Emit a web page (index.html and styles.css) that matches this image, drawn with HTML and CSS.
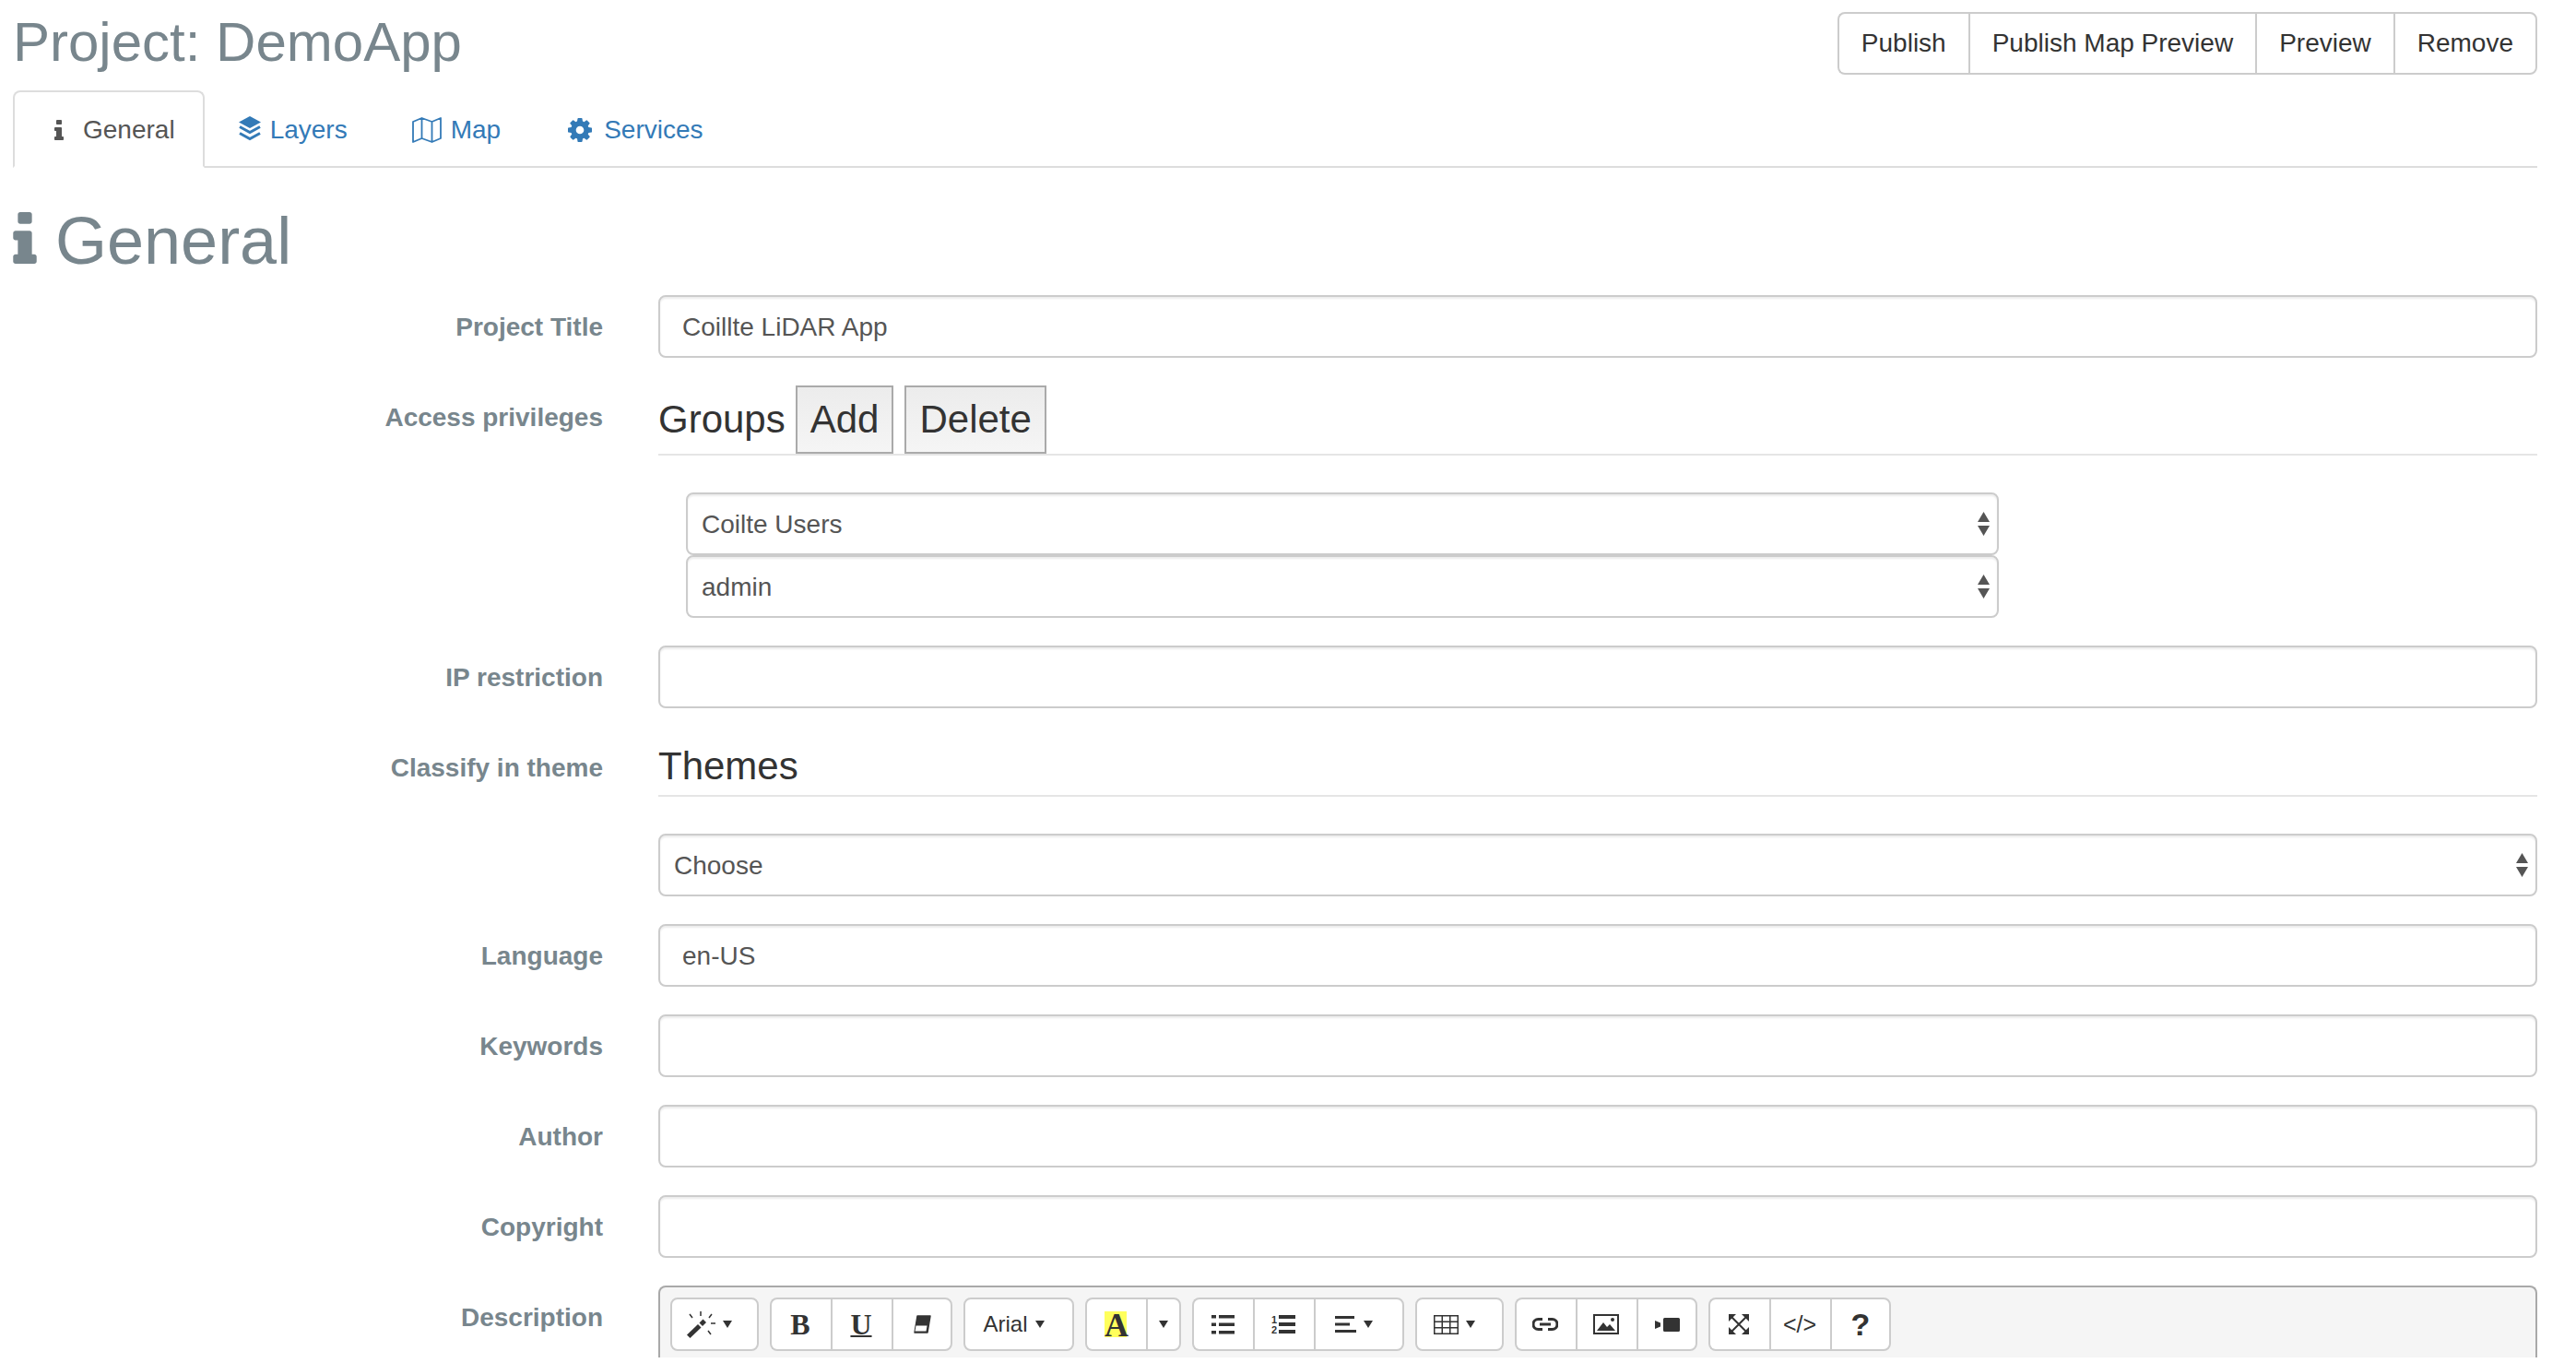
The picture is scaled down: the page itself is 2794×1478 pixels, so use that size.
FILE: index.html
```html
<!DOCTYPE html>
<html lang="en">
<head>
  <meta charset="UTF-8" />
  <title>Project: DemoApp</title>
  <meta name="viewport" content="width=device-width, initial-scale=1.0" />
  <link rel="stylesheet" href="styles.css">
</head>
<body>
  <div class="page">
    <div class="page-head">
      <h2 class="project-title">Project: DemoApp</h2>
      <div class="btn-group">
        <button>Publish</button>
        <button>Publish Map Preview</button>
        <button>Preview</button>
        <button>Remove</button>
      </div>
    </div>

    <ul class="tabs">
      <li class="tab active"><a href="#">
        <span class="tab-icon"><svg width="10" height="22" viewBox="576 128 640 1408"><path fill="currentColor" d="M1216 1344v128q0 26-19 45t-45 19h-512q-26 0-45-19t-19-45v-128q0-26 19-45t45-19h64v-384h-64q-26 0-45-19t-19-45v-128q0-26 19-45t45-19h384q26 0 45 19t19 45v576h64q26 0 45 19t19 45zm-128-1152v192q0 26-19 45t-45 19h-256q-26 0-45-19t-19-45v-192q0-26 19-45t45-19h256q26 0 45 19t19 45z"/></svg></span>General</a></li>
      <li class="tab"><a href="#">
        <span class="tab-icon narrow"><svg class="layers-icon" width="26" height="27" viewBox="0 0 26 27"><path fill="currentColor" d="M13 0l12 6.500-12 6.500-12-6.500z"/><path fill="none" stroke="currentColor" stroke-width="3" d="M2 11.500l11 6 11-6M2 18.500l11 6 11-6"/></svg></span>Layers</a></li>
      <li class="tab"><a href="#">
        <span class="tab-icon"><svg width="32" height="28" viewBox="0 0 32 28"><path fill="none" stroke="currentColor" stroke-width="1.800" stroke-linejoin="round" d="M1 5l9.500-4 11 4 9.500-4v22l-9.500 4-11-4-9.500 4zM10.500 1v22M21.500 5v22"/></svg></span>Map</a></li>
      <li class="tab"><a href="#">
        <span class="tab-icon"><svg width="26" height="26" viewBox="128 128 1536 1536"><path fill="currentColor" d="M1152 896q0-106-75-181t-181-75-181 75-75 181 75 181 181 75 181-75 75-181zm512-109v222q0 12-8 23t-20 13l-185 28q-19 54-39 91 35 50 107 138 10 12 10 25t-9 23q-27 37-99 108t-94 71q-12 0-26-9l-138-108q-44 23-91 38-16 136-29 186-7 28-36 28h-222q-14 0-24.500-8.500t-11.500-21.500l-28-184q-49-16-90-37l-141 107q-10 9-25 9-14 0-25-11-126-114-165-168-7-10-7-23 0-12 8-23 15-21 51-66.500t54-70.500q-27-50-41-99l-183-27q-13-2-21-12.500t-8-23.500v-222q0-12 8-23t19-13l186-28q14-46 39-92-40-57-107-138-10-12-10-24 0-10 9-23 26-36 98.500-107.500t94.500-71.500q13 0 26 10l138 107q44-23 91-38 16-136 29-186 7-28 36-28h222q14 0 24.500 8.500t11.500 21.500l28 184q49 16 90 37l142-107q9-9 24-9 13 0 25 10 129 119 165 170 7 8 7 22 0 12-8 23-15 21-51 66.500t-54 70.500q26 50 41 98l183 28q13 2 21 12.500t8 23.500z"/></svg></span>Services</a></li>
    </ul>

    <h1 class="section-title">
      <svg width="26" height="56" viewBox="576 128 640 1408"><path fill="currentColor" d="M1216 1344v128q0 26-19 45t-45 19h-512q-26 0-45-19t-19-45v-128q0-26 19-45t45-19h64v-384h-64q-26 0-45-19t-19-45v-128q0-26 19-45t45-19h384q26 0 45 19t19 45v576h64q26 0 45 19t19 45zm-128-1152v192q0 26-19 45t-45 19h-256q-26 0-45-19t-19-45v-192q0-26 19-45t45-19h256q26 0 45 19t19 45z"/></svg>
      General
    </h1>

    <form class="form">
      <label>Project Title</label>
      <div class="field"><input type="text" value="Coillte LiDAR App"></div>

      <label>Access privileges</label>
      <div class="field">
        <div class="legend legend-btns">
          <span class="legend-name">Groups</span>
          <button type="button" class="legend-btn">Add</button>
          <button type="button" class="legend-btn">Delete</button>
        </div>
        <div class="group-list">
          <div class="select-wrap">
            <select><option>Coilte Users</option></select>
            <svg class="updown" width="13" height="26" viewBox="0 0 13 26"><path fill="currentColor" d="M6.500 0l6.500 11h-13zM0 15h13l-6.500 11z"/></svg>
          </div>
          <div class="select-wrap">
            <select><option>admin</option></select>
            <svg class="updown" width="13" height="26" viewBox="0 0 13 26"><path fill="currentColor" d="M6.500 0l6.500 11h-13zM0 15h13l-6.500 11z"/></svg>
          </div>
        </div>
      </div>

      <label>IP restriction</label>
      <div class="field"><input type="text"></div>

      <label>Classify in theme</label>
      <div class="field">
        <div class="legend">Themes</div>
        <div class="select-wrap">
          <select><option>Choose</option></select>
          <svg class="updown" width="13" height="26" viewBox="0 0 13 26"><path fill="currentColor" d="M6.500 0l6.500 11h-13zM0 15h13l-6.500 11z"/></svg>
        </div>
      </div>

      <label>Language</label>
      <div class="field"><input type="text" value="en-US"></div>

      <label>Keywords</label>
      <div class="field"><input type="text"></div>

      <label>Author</label>
      <div class="field"><input type="text"></div>

      <label>Copyright</label>
      <div class="field"><input type="text"></div>

      <label>Description</label>
      <div class="editor">
        <div class="note-group">
          <span class="note-btn w96 has-caret">
            <svg width="31" height="29" viewBox="0 0 31 29"><path fill="#333" d="M0 25.500l12-11.500 3.500 3.500-12 11.500z"/><path fill="#333" d="M13.500 12.500l4-4 3.500 3.500-4 4z"/><path stroke="#333" stroke-width="1.500" fill="none" d="M15 0v5M3 3l3 4M27 3l-3 4M26 13h5M23 21l3 4"/></svg>
            <i class="caret"></i>
          </span>
        </div>
        <div class="note-group">
          <span class="note-btn glyph-b">B</span>
          <span class="note-btn glyph-u">U</span>
          <span class="note-btn">
            <svg width="20" height="20" viewBox="0 0 20 20"><path fill="#333" stroke="#333" stroke-width="1.500" stroke-linejoin="round" d="M5 1h14l-3 18h-14z"/><path fill="#fff" d="M3.500 11.500h12l-1 6h-12z"/></svg>
          </span>
        </div>
        <div class="note-group">
          <span class="note-btn w120 has-caret font-name">Arial<i class="caret"></i></span>
        </div>
        <div class="note-group">
          <span class="note-btn"><span class="glyph-a">A</span></span>
          <span class="note-btn w38"><i class="caret solo"></i></span>
        </div>
        <div class="note-group">
          <span class="note-btn">
            <svg width="25" height="21" viewBox="0 0 25 21"><path fill="#333" d="M0 0h5v3.500h-5zM8 0h17v3.500h-17zM0 8.500h5v3.500h-5zM8 8.500h17v3.500h-17zM0 17h5v3.500h-5zM8 17h17v3.500h-17z"/></svg>
          </span>
          <span class="note-btn">
            <svg width="26" height="22" viewBox="0 0 26 22"><text x="0" y="10" class="ol-num">1</text><text x="0" y="21" class="ol-num">2</text><path fill="#333" d="M8 1h18v4h-18zM8 9h18v4h-18zM8 17h18v4h-18z"/></svg>
          </span>
          <span class="note-btn w98 has-caret">
            <svg width="23" height="18" viewBox="0 0 23 18"><path fill="#333" d="M0 0h21v3h-21zM0 7.500h16v3h-16zM0 15h23v3h-23z"/></svg>
            <i class="caret"></i>
          </span>
        </div>
        <div class="note-group">
          <span class="note-btn w96 has-caret">
            <svg width="27" height="21" viewBox="0 0 27 21"><path fill="none" stroke="#333" stroke-width="1.500" d="M.75.75h25.500v19.500h-25.500zM.75 7.250h25.500M.75 13.750h25.500M9.250.75v19.500M17.750.75v19.500"/></svg>
            <i class="caret"></i>
          </span>
        </div>
        <div class="note-group">
          <span class="note-btn">
            <svg width="28" height="14" viewBox="0 0 28 14"><path fill="none" stroke="#333" stroke-width="3" d="M11 1.500h-4.500a5.500 5.500 0 0 0 0 11h4.500M17 1.500h4.500a5.500 5.500 0 0 1 0 11h-4.500M8 7h12"/></svg>
          </span>
          <span class="note-btn">
            <svg width="28" height="22" viewBox="0 0 28 22"><path fill="none" stroke="#333" stroke-width="2" d="M1 1h26v20h-26z"/><path fill="#333" d="M4 18l7-9 4 5 3-3 6 7z"/><circle fill="#333" cx="21" cy="6" r="2"/></svg>
          </span>
          <span class="note-btn">
            <svg width="27" height="15" viewBox="0 0 27 15"><path fill="#333" d="M9 1.500a1.500 1.500 0 0 1 1.500-1.500h15a1.500 1.500 0 0 1 1.500 1.500v12a1.500 1.500 0 0 1-1.500 1.500h-15a1.500 1.500 0 0 1-1.500-1.500zM0 3l6 2.500v4l-6 2.500z"/></svg>
          </span>
        </div>
        <div class="note-group">
          <span class="note-btn">
            <svg width="22" height="22" viewBox="0 0 22 22"><path fill="none" stroke="#333" stroke-width="2" d="M3 3l16 16M19 3l-16 16"/><path fill="#333" d="M0 0h8l-8 8zM22 0v8l-8-8zM0 22v-8l8 8zM22 22h-8l8-8z"/></svg>
          </span>
          <span class="note-btn glyph-code">&lt;/&gt;</span>
          <span class="note-btn glyph-help">?</span>
        </div>
      </div>
    </form>
  </div>
</body>
</html>
```

FILE: styles.css
```css
* {
  box-sizing: border-box;
}
body {
  margin: 0;
  background: #fff;
  color: #333;
  font-family: "Liberation Sans", Arial, sans-serif;
  font-size: 28px;
  line-height: 40px;
}
.page {
  padding: 13px 42px 0 14px;
}
.page-head {
  display: flex;
  justify-content: space-between;
  align-items: flex-start;
  margin-bottom: 17px;
}
.project-title {
  margin: 0;
  font-size: 60px;
  line-height: 66px;
  font-weight: normal;
  color: #78868d;
}
.btn-group {
  display: flex;
  height: 68px;
}
.btn-group button {
  font: inherit;
  color: #333;
  background: #fff;
  border: 2px solid #ccc;
  border-right: 0;
  padding: 0 24px;
}
.btn-group button:first-child {
  border-radius: 8px 0 0 8px;
}
.btn-group button:last-child {
  border-right: 2px solid #ccc;
  border-radius: 0 8px 8px 0;
}

.tabs {
  display: flex;
  gap: 4px;
  list-style: none;
  margin: 0 0 40px;
  padding: 0;
  border-bottom: 2px solid #ddd;
}
.tab {
  margin-bottom: -2px;
}
.tab a {
  display: flex;
  align-items: center;
  padding: 21px 30px 19px;
  border: 2px solid transparent;
  border-radius: 8px 8px 0 0;
  color: #337ab7;
  text-decoration: none;
}
.tab.active a {
  color: #555;
  background: #fff;
  border-color: #ddd #ddd #fff;
}
.tab-icon {
  display: flex;
  justify-content: center;
  width: 36px;
  margin-right: 8px;
}
.tab-icon.narrow {
  width: 27px;
}
.layers-icon {
  margin-top: -4px;
}

.section-title {
  display: flex;
  align-items: baseline;
  gap: 20px;
  margin: 0 0 19px;
  font-size: 72px;
  line-height: 79px;
  font-weight: normal;
  color: #78868d;
}

.form {
  display: grid;
  grid-template-columns: 640px 1fr;
  column-gap: 60px;
  row-gap: 30px;
}
.form label {
  padding-top: 15px;
  text-align: right;
  font-weight: bold;
  color: #78868d;
}
input,
select {
  display: block;
  width: 100%;
  height: 68px;
  font: inherit;
  color: #555;
  background: #fff;
  border: 2px solid #ccc;
  border-radius: 8px;
  box-shadow: inset 0 2px 2px rgba(0, 0, 0, .075);
}
input {
  padding: 2px 24px 0;
}
select {
  appearance: none;
  padding: 2px 15px 0;
}
.select-wrap {
  position: relative;
}
.updown {
  position: absolute;
  right: 10px;
  top: 21px;
  color: #555;
}
.group-list {
  width: 1424px;
  margin-left: 30px;
}

.legend {
  height: 66px;
  margin-bottom: 40px;
  padding-top: 2px;
  display: flex;
  align-items: center;
  font-size: 42px;
  border-bottom: 2px solid #e5e5e5;
}
.legend-btns {
  height: 76px;
  gap: 12px;
  padding-top: 0;
}
.legend-name {
  margin-right: -1px;
}
.legend-btn {
  height: 74px;
  font: inherit;
  color: #333;
  padding: 0 14px;
  background: linear-gradient(#ececec, #f5f5f5);
  border: 2px solid #aaa;
}

.editor {
  height: 78px;
  padding: 11px 11px 0;
  display: flex;
  gap: 12px;
  background: #f5f5f5;
  border: 2px solid #a9a9a9;
  border-bottom: 0;
  border-radius: 8px 8px 0 0;
}
.note-group {
  display: flex;
}
.note-btn {
  display: flex;
  align-items: center;
  justify-content: center;
  width: 66px;
  height: 58px;
  padding-right: 2px;
  background: #fff;
  border: 2px solid #ccc;
  border-right: 0;
}
.note-btn:first-child {
  border-radius: 8px 0 0 8px;
}
.note-btn:last-child {
  padding-right: 0;
  border-right: 2px solid #ccc;
  border-radius: 0 8px 8px 0;
}
.note-btn:only-child {
  border-radius: 8px;
}
.note-btn.has-caret {
  padding-right: 11px;
}
.w38 {
  width: 38px;
}
.w96 {
  width: 96px;
}
.w98 {
  width: 98px;
}
.w120 {
  width: 120px;
}
.caret {
  width: 0;
  height: 0;
  margin-left: 8px;
  border-top: 8px solid #333;
  border-left: 5.5px solid transparent;
  border-right: 5.5px solid transparent;
}
.caret.solo {
  margin-left: 0;
}
.font-name {
  font-size: 24px;
}
.glyph-b,
.glyph-u {
  font-family: "Liberation Serif", serif;
  font-weight: bold;
  font-size: 32px;
}
.glyph-u {
  text-decoration: underline;
  text-decoration-thickness: 2px;
}
.glyph-a {
  display: block;
  width: 24px;
  height: 28px;
  background: #ffff5c;
  text-align: center;
  font-family: "Liberation Serif", serif;
  font-weight: bold;
  font-size: 36px;
  line-height: 31px;
}
.glyph-code {
  font-size: 25px;
}
.glyph-help {
  font-size: 34px;
  font-weight: bold;
}
.ol-num {
  font-size: 11px;
  font-weight: bold;
  fill: #333;
}
```
